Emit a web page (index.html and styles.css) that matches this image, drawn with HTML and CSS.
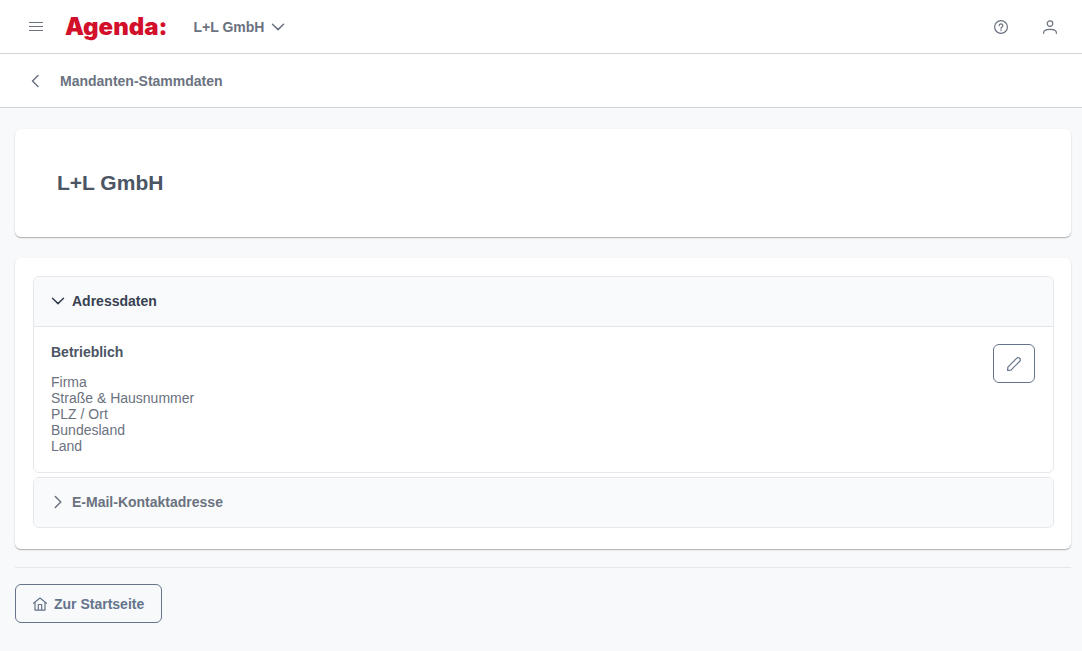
FILE: index.html
```html
<!DOCTYPE html>
<html lang="de">
<head>
	<meta charset="UTF-8">
	<meta name="viewport" content="width=device-width, initial-scale=1">
	<title>Mandanten-Stammdaten</title>
	<link rel="stylesheet" href="styles.css">
</head>
<body>
	<header class="topbar">
		<button type="button" class="icon-button" aria-label="Menü">
			<svg class="icon" viewBox="0 0 14 14"><path d="M.5 2.500h13M.5 6.500h13M.5 10.500h13"/></svg>
		</button>
		<a href="#" class="logo">Agenda:</a>
		<button type="button" class="client">
			L+L GmbH
			<svg class="icon chevron" viewBox="0 0 14 14"><path d="M1.500 4.300L7 9.600l5.500-5.300"/></svg>
		</button>
		<div class="actions">
			<button type="button" class="icon-button" aria-label="Hilfe">
				<svg class="icon" viewBox="0 0 14 14"><circle cx="7" cy="7" r="6.4"/><path d="M5.200 5.600a1.800 1.800 0 1 1 2.600 1.600q-.8.4-.8 1.200M7 9.800v.8"/></svg>
			</button>
			<button type="button" class="icon-button" aria-label="Benutzer">
				<svg class="icon" viewBox="0 0 14 14"><circle cx="7" cy="3.600" r="2.800"/><path d="M.6 13.300v-.6C.6 10.500 3 9.300 7 9.300s6.400 1.200 6.400 3.400v.6"/></svg>
			</button>
		</div>
	</header>

	<nav class="subbar">
		<a href="#" class="icon-button" aria-label="Zurück">
			<svg class="icon chevron" viewBox="0 0 14 14"><path d="M9 1.500L3.500 7 9 12.500"/></svg>
		</a>
		<span>Mandanten-Stammdaten</span>
	</nav>

	<main>
		<section class="card title-card">
			<h1>L+L GmbH</h1>
		</section>

		<section class="card data-card">
			<details class="panel" open>
				<summary>
					<svg class="icon chevron" viewBox="0 0 14 14"><path d="M1.500 4.300L7 9.600l5.500-5.300"/></svg>
					Adressdaten
				</summary>
				<div class="panel-content">
					<div>
						<h2>Betrieblich</h2>
						<ul>
							<li>Firma</li>
							<li>Straße &amp; Hausnummer</li>
							<li>PLZ / Ort</li>
							<li>Bundesland</li>
							<li>Land</li>
						</ul>
					</div>
					<button type="button" class="button" aria-label="Bearbeiten">
						<svg class="icon" viewBox="0 0 14 14"><path d="M.6 13.400l.3-3.300 8.900-8.900a1.900 1.900 0 0 1 2.700 0l.3.3a1.900 1.900 0 0 1 0 2.700l-8.900 8.900z"/></svg>
					</button>
				</div>
			</details>
			<details class="panel">
				<summary>
					<svg class="icon chevron" viewBox="0 0 14 14"><path d="M4.300 1.500L9.800 7l-5.500 5.500"/></svg>
					E-Mail-Kontaktadresse
				</summary>
			</details>
		</section>

		<footer>
			<a href="#" class="button">
				<svg class="icon" viewBox="0 0 14 14"><path d="M.6 6.300L7 1l6.400 5.300M2 5.200v7.900h10V5.200M5.300 13V7.500h3.400V13"/></svg>
				Zur Startseite
			</a>
		</footer>
	</main>
</body>
</html>
```

FILE: styles.css
```css
* {
	box-sizing: border-box;
}
body {
	margin: 0;
	background: #f8f9fb;
	color: #6b7280;
	font: 14px/16px "Liberation Sans", Arial, sans-serif;
}
h1, h2, ul {
	margin: 0;
	padding: 0;
}
button {
	font: inherit;
	color: inherit;
}
a {
	color: inherit;
	text-decoration: none;
}
.icon {
	display: block;
	flex: none;
	width: 14px;
	height: 14px;
	fill: none;
	stroke: currentColor;
	stroke-width: 1.2;
	stroke-linecap: round;
	stroke-linejoin: round;
}
.chevron {
	stroke-width: 1.5;
}
.icon-button,
.client {
	display: flex;
	align-items: center;
	padding: 0;
	border: 0;
	background: none;
	cursor: pointer;
}

/* bars */
.topbar,
.subbar {
	display: flex;
	align-items: center;
	height: 54px;
	padding: 0 25px 0 29px;
	border-bottom: 1px solid #d1d5db;
	background: #fff;
}
.logo {
	margin: 0 26px 0 22px;
	color: #d3102c;
	font: 900 24px/28px Inter, sans-serif;
}
.client {
	gap: 7px;
	font-weight: bold;
}
.actions {
	display: flex;
	gap: 35px;
	margin-left: auto;
}
.subbar {
	gap: 17px;
	font-weight: bold;
}

main {
	padding: 21px 11px 28px 15px;
}
.card {
	margin-bottom: 21px;
	border-radius: 6px;
	background: #fff;
	box-shadow: 0 1px 1px rgba(0,0,0,.25), 0 1px 3px rgba(0,0,0,.08);
}
.title-card {
	padding: 42px;
}
h1 {
	color: #4b5563;
	font-size: 21px;
	line-height: 24px;
}
.data-card {
	padding: 18px 17px 21px 18px;
	margin-bottom: 18px;
}

/* accordion */
.panel {
	border: 1px solid #e5e7eb;
	border-radius: 6px;
	overflow: hidden;
}
.panel + .panel {
	margin-top: 4px;
}
summary {
	display: flex;
	align-items: center;
	gap: 7px;
	height: 49px;
	padding: 0 17px 1px;
	background: #f9fafb;
	font-weight: bold;
	list-style: none;
	cursor: pointer;
}
.panel[open] summary {
	height: 50px;
	border-bottom: 1px solid #e5e7eb;
	color: #374151;
}
.panel-content {
	display: flex;
	justify-content: space-between;
	align-items: flex-start;
	padding: 17px 18px 18px 17px;
}
h2 {
	margin-bottom: 14px;
	color: #4b5563;
	font-size: 14px;
	line-height: 16px;
}
ul {
	list-style: none;
}

.button {
	display: inline-flex;
	align-items: center;
	gap: 7px;
	height: 39px;
	padding: 0 17px;
	border: 1px solid #64748b;
	border-radius: 6px;
	background: none;
	color: #64748b;
	font-weight: bold;
	cursor: pointer;
}
.panel-content .button {
	padding: 0 13px;
}
footer {
	padding-top: 16px;
	border-top: 1px solid #e5e7eb;
}
```
